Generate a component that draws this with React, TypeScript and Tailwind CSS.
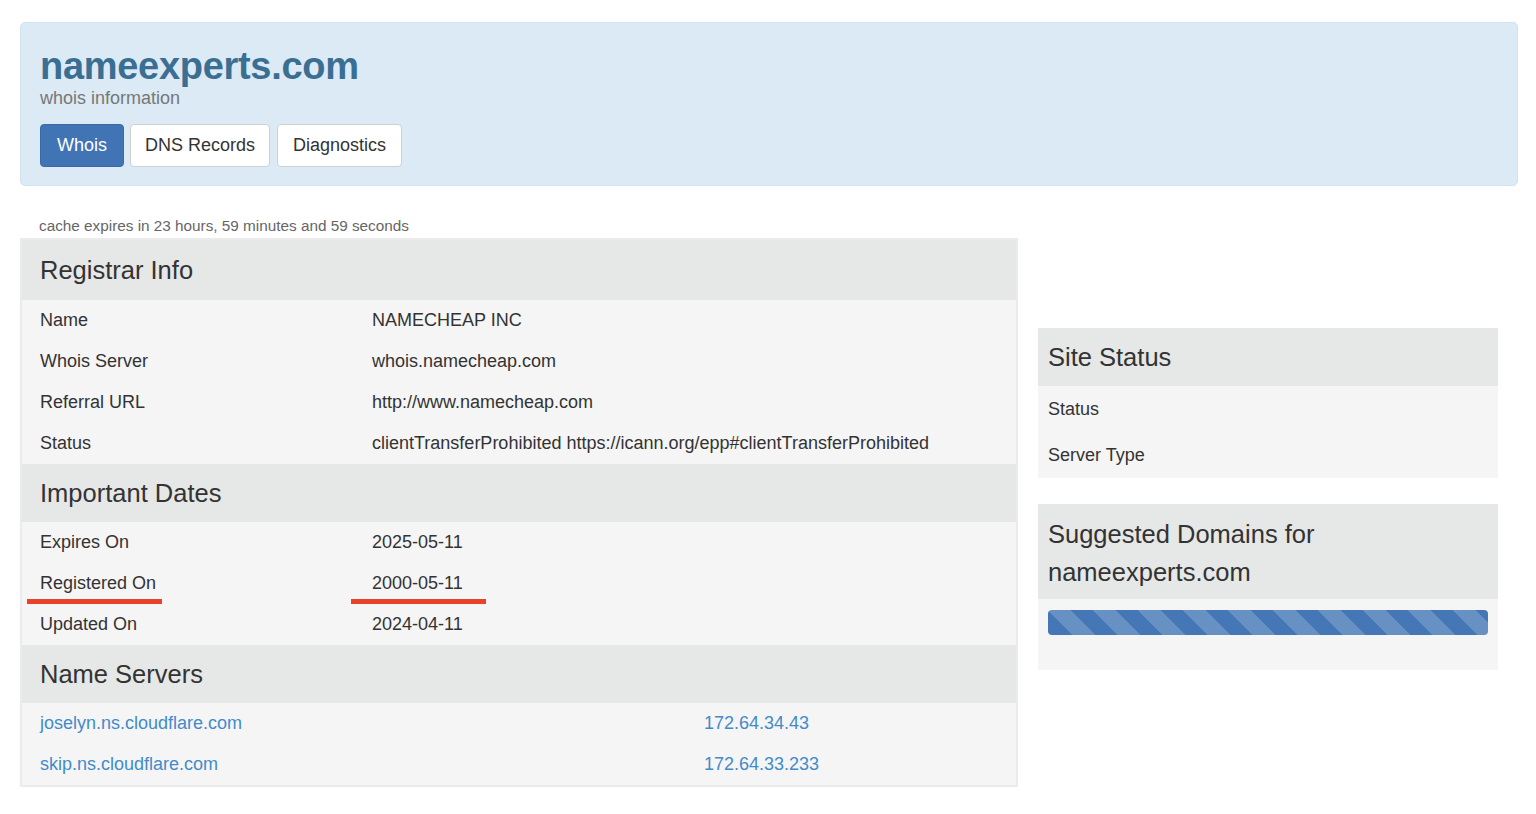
import React from "react";

const font = { fontFamily: '"Liberation Sans", Arial, Helvetica, sans-serif' };

function SectionHeader({ children, first }: { children: React.ReactNode; first?: boolean }) {
  return (
    <div
      className={
        (first ? "h-[60px] pt-[1px] " : "h-[58px] ") +
        "flex items-center bg-[#e6e7e7] pl-[18px] text-[25.5px] text-[#333]"
      }
    >
      {children}
    </div>
  );
}

function Row({ label, value }: { label: string; value: string }) {
  return (
    <div className="h-[41px] flex items-center pl-[18px] text-[18px] text-[#333]">
      <div className="w-[332px] shrink-0">{label}</div>
      <div>{value}</div>
    </div>
  );
}

export default function App() {
  return (
    <div style={font} className="min-h-[814px] bg-white pt-[22px] pl-[20px] pr-[18px]">
      {/* Header jumbotron */}
      <div className="h-[164px] rounded-[5px] border border-[#cfe3f0] bg-[#dbeaf5] pl-[19px] pt-[23px]">
        <div className="text-[38px] leading-[40px] font-bold text-[#3a6f93] tracking-[-0.3px]">
          nameexperts.com
        </div>
        <div className="text-[18px] leading-[22px] text-[#777] mt-[1px]">whois information</div>
        <div className="flex mt-[15px]">
          <div className="h-[43px] px-[16px] flex items-center rounded-[4px] bg-[#4174b4] border border-[#3a69a5] text-white text-[18px]">
            Whois
          </div>
          <div className="ml-[6px] h-[43px] px-[14px] flex items-center rounded-[4px] bg-white border border-[#d0d0d0] text-[#333] text-[18px]">
            DNS Records
          </div>
          <div className="ml-[7px] h-[43px] px-[15px] flex items-center rounded-[4px] bg-white border border-[#d0d0d0] text-[#333] text-[18px]">
            Diagnostics
          </div>
        </div>
      </div>

      <div className="flex">
        {/* Left column */}
        <div className="w-[998px] shrink-0">
          <div className="h-[52px] flex items-end pb-[0px] pl-[19px] text-[15.3px] text-[#666]">
            cache expires in 23 hours, 59 minutes and 59 seconds
          </div>
          <div className="relative border-2 border-[#ebebeb] bg-[#f5f5f5]">
            <SectionHeader first>Registrar Info</SectionHeader>
            <Row label="Name" value="NAMECHEAP INC" />
            <Row label="Whois Server" value="whois.namecheap.com" />
            <Row label="Referral URL" value="http://www.namecheap.com" />
            <Row
              label="Status"
              value="clientTransferProhibited https://icann.org/epp#clientTransferProhibited"
            />
            <SectionHeader>Important Dates</SectionHeader>
            <Row label="Expires On" value="2025-05-11" />
            <div className="relative">
              <Row label="Registered On" value="2000-05-11" />
              <div className="absolute left-[5px] top-[36px] w-[135px] h-[5px] bg-[#e8432a]" />
              <div className="absolute left-[329px] top-[36px] w-[135px] h-[5px] bg-[#e8432a]" />
            </div>
            <Row label="Updated On" value="2024-04-11" />
            <SectionHeader>Name Servers</SectionHeader>
            <div className="h-[41px] flex items-center pl-[18px] text-[18px] text-[#428bca]">
              <div className="w-[664px] shrink-0">joselyn.ns.cloudflare.com</div>
              <div>172.64.34.43</div>
            </div>
            <div className="h-[41px] flex items-center pl-[18px] text-[18px] text-[#428bca]">
              <div className="w-[664px] shrink-0">skip.ns.cloudflare.com</div>
              <div>172.64.33.233</div>
            </div>
          </div>
        </div>

        {/* Right column */}
        <div className="w-[460px] shrink-0 ml-[20px] pt-[142px]">
          <div className="bg-[#f5f5f5]">
            <div className="h-[58px] flex items-center bg-[#e6e7e7] pl-[10px] text-[25.5px] text-[#333]">
              Site Status
            </div>
            <div className="h-[46px] flex items-center pt-[1px] pl-[10px] text-[18px] text-[#333]">Status</div>
            <div className="h-[46px] flex items-center pl-[10px] text-[18px] text-[#333]">Server Type</div>
          </div>
          <div className="mt-[26px] bg-[#f5f5f5]">
            <div className="bg-[#e6e7e7] pl-[10px] pt-[11px] pb-[8px] text-[25.5px] leading-[38px] text-[#333]">
              Suggested Domains for
              <br />
              nameexperts.com
            </div>
            <div className="px-[10px] pt-[11px] pb-[35px]">
              <div className="h-[25px] rounded-[4px] bg-[#4577b6] bg-[linear-gradient(45deg,rgba(255,255,255,.18)_25%,transparent_25%,transparent_50%,rgba(255,255,255,.18)_50%,rgba(255,255,255,.18)_75%,transparent_75%,transparent)] bg-[length:45px_45px]" />
            </div>
          </div>
        </div>
      </div>
    </div>
  );
}
